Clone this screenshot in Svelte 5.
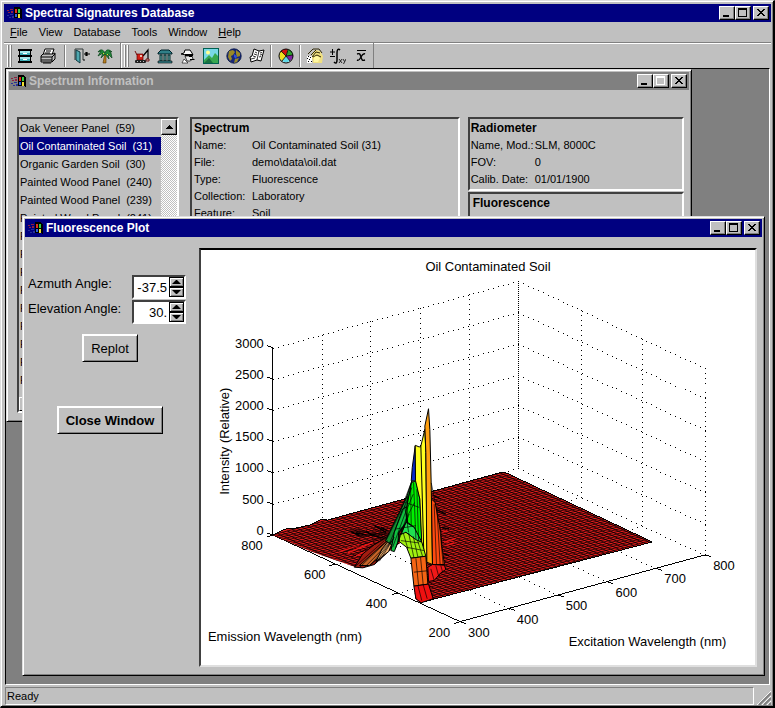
<script lang="ts">
  let azimuth = $state('-37.5');
  let elevation = $state('30.');
  let selected = $state(1);

  const menus = ['File', 'View', 'Database', 'Tools', 'Window', 'Help'];
  const underlined = ['File', 'Help'];
  const toolGroups = [
    [['cabinet', 'printer'], ['exit', 'palm']],
    [['digger', 'museum', 'agent', 'picture', 'globe', 'papers'], ['pie'], ['hand', 'integral', 'mean']],
  ];

  const spectra = [
    'Oak Veneer Panel  (59)',
    'Oil Contaminated Soil  (31)',
    'Organic Garden Soil  (30)',
    'Painted Wood Panel  (240)',
    'Painted Wood Panel  (239)',
    'Painted Wood Panel  (241)',
    ...Array(9).fill('Painted Wood Panel'),
  ];

  const spectrumInfo = [
    ['Name:', 'Oil Contaminated Soil (31)'],
    ['File:', 'demo\\data\\oil.dat'],
    ['Type:', 'Fluorescence'],
    ['Collection:', 'Laboratory'],
    ['Feature:', 'Soil'],
  ];
  const radiometerInfo = [
    ['Name, Mod.:', 'SLM, 8000C'],
    ['FOV:', '0'],
    ['Calib. Date:', '01/01/1900'],
  ];

  // projection of (excitation, emission, intensity) onto the plot
  function project(ex: number, em: number, z = 0) {
    const u = (ex - 300) / 500;
    const v = (800 - em) / 600;
    return [273 + u * 246 + v * 188, 536 - u * 67 + v * 87 - (z / 3000) * 188];
  }

  // a row of single pixels between two points
  function dots(a: number[], b: number[], step = 5) {
    const n = Math.max(1, Math.round(Math.max(Math.abs(b[0] - a[0]), Math.abs(b[1] - a[1])) / step));
    let d = '';
    for (let i = 0; i <= n; i++) {
      const x = Math.round(a[0] + ((b[0] - a[0]) * i) / n);
      const y = Math.round(a[1] + ((b[1] - a[1]) * i) / n);
      d += `M${x} ${y}h1v1h-1z`;
    }
    return d;
  }

  function segment(a: number[], b: number[]) {
    return `M${a[0].toFixed(1)} ${a[1].toFixed(1)}L${b[0].toFixed(1)} ${b[1].toFixed(1)}`;
  }

  let grid = '';
  for (let z = 0; z <= 3000; z += 500) {
    grid += dots(project(300, 800, z), project(800, 800, z));
    grid += dots(project(800, 800, z), project(800, 200, z));
  }
  for (let ex = 400; ex <= 700; ex += 100) {
    grid += dots(project(ex, 800), project(ex, 800, 3000));
    grid += dots(project(ex, 200), project(ex, 800));
  }
  for (let em = 200; em <= 600; em += 200) {
    grid += dots(project(800, em), project(800, em, 3000));
    if (em > 200) grid += dots(project(300, em), project(800, em));
  }
  grid += dots(project(800, 800), project(800, 800, 3000), 2);

  let mesh = '';
  for (let i = 0; i <= 48; i++) {
    const em = 327 + (i * 473) / 48;
    const ex = 300 + (i * 474) / 48;
    mesh += segment(project(300, em), project(774, em));
    mesh += segment(project(ex, 327), project(ex, 800));
  }

  let axes = segment(project(300, 800, 3000), project(300, 800));
  axes += segment(project(300, 800), project(300, 200));
  axes += segment(project(300, 200), project(800, 200));
  const zTicks: { y: number; label: number }[] = [];
  for (let z = 0; z <= 3000; z += 500) {
    const [x, y] = project(300, 800, z);
    axes += segment([x, y], [x - 6, y - 2]);
    zTicks.push({ y: Math.round(y), label: z });
  }
  const emTicks: { x: number; y: number; label: number }[] = [];
  for (let em = 800; em >= 200; em -= 200) {
    const [x, y] = project(300, em);
    axes += segment([x, y], [x - 6, y + 2]);
    emTicks.push({ x: Math.round(x - 10), y: Math.round(y + 15), label: em });
  }
  const exTicks: { x: number; y: number; label: number }[] = [];
  for (let ex = 300; ex <= 800; ex += 100) {
    const [x, y] = project(ex, 200);
    axes += segment([x, y], [x + 6, y + 2]);
    exTicks.push({ x: Math.round(x + 8), y: Math.round(y + 15), label: ex });
  }

  const facets = [
    ['#a01c10', '285,505 310,507 345,497 385,460 405,400 380,415 345,437 310,465'],
    ['#c86428', '300,500 330,500 375,462 395,430 380,428 350,455'],
    ['#f0b070', '350,488 388,458 402,425 388,425 368,450'],
    ['#109030', '378,425 410,360 440,300 458,245 465,300 450,360 420,400 400,440'],
    ['#10c040', '395,455 405,458 416,430 418,400 440,370 448,320 430,330 405,400'],
    ['#00f000', '457,250 470,245 482,300 488,425 478,420 465,385 445,370 440,335'],
    ['#20e050', '440,370 465,385 488,430 470,425 440,400 420,420'],
    ['#0a28c8', '468,140 459,205 456,245 469,245'],
    ['#ffff20', '468,138 480,143 485,140 490,160 494,440 488,440 482,300 469,245'],
    ['#ffff20', '485,140 497,90 500,160 504,480 494,470'],
    ['#ffa010', '508,28 512,90 516,250 520,497 503,490 500,160 497,80'],
    ['#ff4a10', '517,300 528,310 535,350 545,400 548,440 556,497 520,497'],
    ['#a0f010', '420,408 440,400 470,422 488,430 500,472 455,478 442,445 420,428'],
    ['#f46414', '455,478 500,472 506,556 464,562'],
    ['#f01010', '464,562 508,556 522,600 486,612 470,600'],
    ['#f01818', '506,505 520,497 556,499 560,512 545,522 525,545 508,548'],
  ];

  const creases = [
    'M285 505L375 425M300 506L385 425M315 506L392 428M330 502L398 425M345 497L402 420M360 487L405 415M250 460L380 410M275 475L380 418',
    'M270 395L380 408M285 390L360 412M300 415L380 400M340 390L385 412M290 410L350 405M355 385L390 405',
    'M380 425L418 350L458 245M390 435L425 350L458 265M400 445L435 350L462 285M408 450L440 360L466 310M416 430L450 345',
    'M445 290V370M454 260L456 380M463 250L470 420M473 270L478 425M436 320L448 400M410 390L470 380M438 310L480 325',
    'M432 402L446 450M448 402L464 476M462 412L476 474M475 425L490 472M425 425L480 432M442 445L494 455',
    'M470 478L478 560M484 475L492 558M476 560L488 606M492 558L504 600M464 520L503 516',
    'M516 250L528 310M525 315L532 497M534 340L543 497M542 385L552 497M515 510L525 545M530 500L538 530M545 500L550 518',
  ];

  // low bumps around the foot of the ridge
  const ripplesBright = 'M240 458L300 440M265 462L340 430M290 470L350 445M555 430L590 418M560 440L585 432M550 400L565 395';
  const ripplesDark = 'M275 398L300 410M290 402L320 408M320 395L340 412M345 380L380 400M365 385L385 395M340 410L385 420M525 290L545 300M530 330L560 345M548 385L570 390M555 465L570 470M440 295L455 290';
</script>

{#snippet flag()}
  <svg class="flag" viewBox="0 0 16 14" aria-hidden="true">
    <path d="M8 1h5l3 2v10l-3-1H8z" fill="#000" />
    <path d="M9 3h2v4H9z" fill="#e03020" />
    <path d="M12 3h2v4h-2z" fill="#30d040" />
    <path d="M9 8h2v3H9z" fill="#3060e0" />
    <path d="M12 8h2v4h-2z" fill="#f0e030" />
    <path d="M1 4h2v1H1zM4 3h3v1H4zM2 6h2v1H2zM5 5h2v2H5z" fill="#902040" />
    <path d="M1 9h2v1H1zM4 8h3v1H4zM3 11h2v1H3zM6 10h2v2H6z" fill="#283098" />
  </svg>
{/snippet}

{#snippet controls(disabled: boolean)}
  <div class="controls">
    <button aria-label="Minimize"><svg viewBox="0 0 12 10"><path d="M2 7h6v2H2z" /></svg></button>
    <button aria-label="Maximize" {disabled}>
      <svg viewBox="0 0 12 10"><path d="M1 0h9v9H1zM2 2v6h7V2z" fill-rule="evenodd" /></svg>
    </button>
    <button class="close" aria-label="Close">
      <svg viewBox="0 0 12 10"><path d="M2 1h2v1h1v1h2V2h1V1h2v1H9v1H8v1H7v1h1v1h1v1h1v1H8V7H7V6H5v1H4v1H2V7h1V6h1V5h1V4H4V3H3V2H2z" /></svg>
    </button>
  </div>
{/snippet}

{#snippet icon(name: string)}
  <svg class="icon" viewBox="0 0 16 16" aria-hidden="true">
    {#if name === 'cabinet'}
      <path d="M1 1h14v2h-1v4h1v2h-1v4h1v2H1v-2h1V9H1V7h1V3H1z" fill="#000" />
      <path d="M3 3h10v4H3zM3 9h10v4H3z" fill="#40b0b8" />
      <path d="M3 3h10v2H3zM3 9h10v2H3z" fill="#a0e8e8" />
      <path d="M6 5h4v1H6zM6 11h4v1H6z" fill="#fff" />
    {:else if name === 'printer'}
      <path d="M5 1h9l-2 6H3z" fill="#fff" stroke="#000" />
      <path d="M6 3h5M5 5h5" stroke="#000" />
      <path d="M1 8l2-2h10l2-1v6l-3 3H1z" fill="#c0c0c0" stroke="#000" />
      <path d="M1 9h11l3-3M1 12h11M12 9v5M3 15h8" fill="none" stroke="#000" />
    {:else if name === 'exit'}
      <path d="M1 12V1h8v11" fill="none" stroke="#303838" />
      <path d="M2 2l4 2v11l-4-3z" fill="#50a8b0" stroke="#103840" />
      <path d="M10 6h6M12 4v4M13 4v4M9 12h2" stroke="#000" stroke-width="1.2" />
    {:else if name === 'palm'}
      <path d="M8 5l1 3v7H6l1-5z" fill="#b88020" stroke="#503000" stroke-width=".6" />
      <path d="M8 5C6 1 3 1 1 4l3-1-3 5 5-3-2 5 4-4 4 5-1-5 4 4-1-5-2-2 3 1C12 1 9 1 8 5z" fill="#208838" stroke="#084018" stroke-width=".7" />
      <path d="M6 5h1v1H6zM10 6h1v1h-1z" fill="#e0e030" />
    {:else if name === 'digger'}
      <path d="M9 8l5-6v9" fill="none" stroke="#000" stroke-width="1.200" />
      <path d="M3 6h6v6H3z" fill="#d02018" stroke="#600" stroke-width=".7" />
      <path d="M6 7h2v2H6z" fill="#e8c0b0" />
      <path d="M1 3l2 4M12 11h3v2h-3z" fill="none" stroke="#701010" />
      <rect x="1" y="12" width="11" height="3" rx="1" fill="#202020" />
      <path d="M3 13h1v1H3zM6 13h1v1H6zM9 13h1v1H9z" fill="#c0c0c0" />
    {:else if name === 'museum'}
      <path d="M1 5l3-3h8l3 3v1H1z" fill="#308088" stroke="#002028" />
      <path d="M3 7h2v6H3zM7 7h2v6H7zM11 7h2v6h-2z" fill="#70b8b8" stroke="#002828" />
      <path d="M1 13h14v2H1z" fill="#388890" stroke="#000" stroke-width=".6" />
    {:else if name === 'agent'}
      <path d="M1 6l3-1 1-3h5l2 3 1 2H6z" fill="#f8f8f8" stroke="#000" />
      <path d="M5 6h8v2H5z" fill="#000" />
      <path d="M5 8h7l1 3-3 2H7z" fill="#e8e8e8" stroke="#000" stroke-width=".7" />
      <path d="M9 8h3v1H9zM10 11h5l-1 1h-4z" />
      <path d="M4 11l4 4H2z" fill="#fff" stroke="#000" stroke-width=".6" />
    {:else if name === 'picture'}
      <rect x=".5" y=".5" width="15" height="15" fill="#78d8e8" stroke="#006050" />
      <circle cx="5" cy="4.500" r="2" fill="#ffff90" />
      <path d="M1 12l5-5 3 3 3-5 3 3v7H1z" fill="#38a850" />
      <path d="M1 15l5-5 4 5z" fill="#187040" />
    {:else if name === 'globe'}
      <circle cx="8" cy="8" r="7.200" fill="#182878" stroke="#001040" stroke-width=".8" />
      <path d="M3 3l4-1 2 2-2 3-2 1 1 3-2 2-2-4zM10 2l4 3v3l-3 1-1-3zM9 11l4-1-2 4-3 1z" fill="#988828" />
      <path d="M8 6l3 2-1 3-2-2z" fill="#3050d8" />
    {:else if name === 'papers'}
      <path d="M5 1l5 2 5-1-3 11-4-1-6 2-1-5 2-1z" fill="#fff" stroke="#000" />
      <path d="M10 3L8 12M6 4l2 1M5 6l3 1M4 8l3 1M11 5l2-.5M11 7l2-.5M10 9l2-.5M2 11l4-1" stroke="#000" stroke-width=".8" />
    {:else if name === 'pie'}
      <circle cx="8" cy="8" r="7" fill="#fff" />
      <path d="M8 8L3 3a7 7 0 0 1 7-1.700z" fill="#d01010" />
      <path d="M8 8l2-6.700A7 7 0 0 1 15 7z" fill="#30a030" />
      <path d="M8 8l7-1a7 7 0 0 1-3 6z" fill="#8020a0" />
      <path d="M8 8l4 5a7 7 0 0 1-8 0z" fill="#60d8e8" />
      <path d="M8 8l-4 5A7 7 0 0 1 3 3z" fill="#f0e020" />
      <circle cx="8" cy="8" r="7" fill="none" stroke="#000" />
      <path d="M8 8L3 3M8 8l2-6M8 8l7-1M8 8l4 5M8 8l-4 5" stroke="#000" stroke-width=".8" />
    {:else if name === 'hand'}
      <path d="M0 8h5v7H0z" fill="#fff" />
      <path d="M1 8h1v1H1zM3 9h1v1H3zM0 10h1v1H0zM2 11h1v1H2zM1 13h1v1H1zM4 13h1v1H4z" />
      <path d="M5 9l1-5 3-2 4 1 3 5-1 7H6z" fill="#f0e080" />
      <path d="M1 6l5-5h6l3 4M4 7l5-5M5 9l4-5 4 1M6 9l4-2 4 2" fill="none" stroke="#302808" />
      <path d="M7 9l3-1 3 2-2 4H7z" fill="#fff8a0" />
    {:else if name === 'integral'}
      <path d="M0 4h5M2.500 1v6M0 8.500h5" stroke="#000" fill="none" />
      <path d="M10 2C8 0 7 2 7 5v7c0 3-1 4-3 2" stroke="#000" stroke-width="1.500" fill="none" />
      <path d="M9 11l3 4M12 11l-3 4M13 11l1.500 2.500M16 11l-2.500 5" stroke="#000" stroke-width=".8" />
    {:else}
      <path d="M4 2.500h9" stroke="#000" />
      <path d="M4 6c3-1 3 0 4 3s1 4 4 3M12 6c-2-1-3 1-4 3s-2 4-4 3" stroke="#000" stroke-width="1.400" fill="none" />
    {/if}
  </svg>
{/snippet}

{#snippet info(rows: string[][])}
  <dl>
    {#each rows as [term, value]}
      <dt>{term}</dt>
      <dd>{value}</dd>
    {/each}
  </dl>
{/snippet}

<div class="app">
  <header class="titlebar">
    {@render flag()}
    <h1>Spectral Signatures Database</h1>
    {@render controls(false)}
  </header>

  <nav class="menubar">
    {#each menus as menu}
      <button>
        {#if underlined.includes(menu)}<u>{menu[0]}</u>{menu.slice(1)}{:else}{menu}{/if}
      </button>
    {/each}
  </nav>

  <div class="toolbar">
    {#each toolGroups as group}
      <div class="band">
        <span class="grip"></span><span class="grip"></span>
        {#each group as part}
          <div class="part">
            {#each part as tool}
              <button aria-label={tool}>{@render icon(tool)}</button>
            {/each}
          </div>
        {/each}
      </div>
    {/each}
  </div>

  <main class="desktop">
    <section class="window info-window">
      <header class="titlebar inactive">
        {@render flag()}
        <h2>Spectrum Information</h2>
        {@render controls(true)}
      </header>
      <div class="info-body">
        <div class="listbox">
          <ul>
            {#each spectra as name, i}
              <li><button class:selected={i === selected} onclick={() => (selected = i)}>{name}</button></li>
            {/each}
          </ul>
          <div class="scrollbar">
            <button aria-label="Scroll up"><svg viewBox="0 0 7 4"><path d="M3 0h1v1h1v1h1v1h1v1H0V3h1V2h1V1h1z" /></svg></button>
          </div>
          <div class="hscroll"><button aria-label="Scroll left"></button></div>
        </div>
        <div class="panel spectrum">
          <h3>Spectrum</h3>
          {@render info(spectrumInfo)}
        </div>
        <div class="side">
          <div class="panel radiometer">
            <h3>Radiometer</h3>
            {@render info(radiometerInfo)}
          </div>
          <div class="panel fluorescence">
            <h3>Fluorescence</h3>
          </div>
        </div>
      </div>
    </section>

    <section class="window plot-window">
      <header class="titlebar">
        {@render flag()}
        <h2>Fluorescence Plot</h2>
        {@render controls(false)}
      </header>
      <div class="plot-body">
        <form class="settings" onsubmit={(e) => e.preventDefault()}>
          <div class="fields">
            <label for="azimuth">Azmuth Angle:</label>
            <div class="spin">
              <input id="azimuth" bind:value={azimuth} />
              <div class="arrows">
                <button type="button" aria-label="Increase azimuth"><svg viewBox="0 0 9 4"><path d="M4 0h1l4 4H0z" /></svg></button>
                <button type="button" aria-label="Decrease azimuth"><svg viewBox="0 0 9 4"><path d="M0 0h9L5 4H4z" /></svg></button>
              </div>
            </div>
            <label for="elevation">Elevation Angle:</label>
            <div class="spin">
              <input id="elevation" bind:value={elevation} />
              <div class="arrows">
                <button type="button" aria-label="Increase elevation"><svg viewBox="0 0 9 4"><path d="M4 0h1l4 4H0z" /></svg></button>
                <button type="button" aria-label="Decrease elevation"><svg viewBox="0 0 9 4"><path d="M0 0h9L5 4H4z" /></svg></button>
              </div>
            </div>
          </div>
          <button class="push">Replot</button>
          <button type="button" class="push strong">Close Window</button>
        </form>

        <div class="plot">
          <svg viewBox="201 250 556 416" role="img" aria-label="Oil Contaminated Soil">
            <defs>
              <clipPath id="surface">
                <path d="M273 536L288 529L292 530L310 526L323 520L328 521L503 473L508 474L654 543L421 604L416 600L413 560L406 540L390 552L375 565L363 569L355 568L310 552Z" />
              </clipPath>
            </defs>
            <path class="dots" d={grid} />
            <path class="axes" d={axes} />
            <g clip-path="url(#surface)">
              <rect x="260" y="460" width="400" height="150" fill="#e01c1c" />
              <path class="mesh" d={mesh} />
            </g>
            <path class="rim" d="M273 536L288 529L292 530L310 526L323 520L328 521L503 473L508 474L654 543L421 604" />
            <g transform="translate(260 400) scale(.33333)">
              <path class="ripple bright" d={ripplesBright} />
              <path class="ripple" d={ripplesDark} />
              {#each facets as [fill, points]}
                <polygon class="facet" {fill} {points} />
              {/each}
              {#each creases as d}
                <path class="crease" {d} />
              {/each}
            </g>
            <text x="489" y="271" text-anchor="middle">Oil Contaminated Soil</text>
            {#each zTicks as t}
              <text x="264" y={t.y} text-anchor="end">{t.label}</text>
            {/each}
            {#each emTicks as t}
              <text x={t.x} y={t.y} text-anchor="end">{t.label}</text>
            {/each}
            {#each exTicks as t}
              <text x={t.x} y={t.y}>{t.label}</text>
            {/each}
            <text transform="translate(229 442) rotate(-90)" text-anchor="middle">Intensity (Relative)</text>
            <text x="208" y="642">Emission Wavelength (nm)</text>
            <text x="570" y="647">Excitation Wavelength (nm)</text>
          </svg>
        </div>
      </div>
    </section>
  </main>

  <footer class="statusbar">
    <span>Ready</span>
    <svg viewBox="0 0 14 14" aria-hidden="true">
      <path d="M0 14L14 0M5 14l9-9M10 14l4-4" stroke="#fff" />
      <path d="M2 14L14 2M7 14l7-7M12 14l2-2" stroke="#808080" stroke-width="2" />
    </svg>
  </footer>
</div>

<style>
  :global(body) {
    margin: 0;
    background: #c0c0c0;
  }

  .app {
    box-sizing: border-box;
    min-height: 100vh;
    display: flex;
    flex-direction: column;
    padding: 3px 2px 1px 3px;
    border: 1px solid #dfdfdf;
    border-right: 2px solid #000;
    border-bottom: 2px solid #000;
    box-shadow: inset 1px 1px #fff, inset -1px -1px #808080;
    background: #c0c0c0;
    color: #000;
    font: 11px/17px "Liberation Sans", Arial, sans-serif;
  }

  button,
  input {
    box-sizing: border-box;
    margin: 0;
    padding: 0;
    border: 0;
    border-radius: 0;
    background: none;
    color: inherit;
    font: inherit;
  }

  h1,
  h2,
  h3,
  dl,
  dd,
  ul {
    margin: 0;
    padding: 0;
  }

  h1,
  h2,
  h3 {
    font-size: 12px;
    font-weight: bold;
    line-height: 18px;
  }

  svg {
    display: block;
    flex: none;
  }

  .titlebar {
    display: flex;
    align-items: center;
    height: 18px;
    padding: 0 2px;
    background: #000080;
    color: #fff;
  }

  .titlebar.inactive {
    padding-left: 1px;
    background: #808080;
    color: #c0c0c0;
  }

  .flag {
    width: 16px;
    height: 14px;
    margin-right: 3px;
    shape-rendering: crispEdges;
  }

  .controls {
    display: flex;
    margin-left: auto;
  }

  .controls button {
    width: 16px;
    height: 14px;
    padding: 1px;
    border: 1px solid;
    border-color: #fff #000 #000 #fff;
    box-shadow: inset -1px -1px #808080;
    background: #c0c0c0;
  }

  .controls .close {
    margin-left: 2px;
  }

  .controls svg {
    width: 12px;
    height: 10px;
    fill: #000;
    shape-rendering: crispEdges;
  }

  .controls button:disabled svg {
    fill: #fff;
  }

  .menubar {
    display: flex;
    gap: 11px;
    height: 20px;
    padding-left: 6px;
  }

  .menubar button {
    line-height: 19px;
  }

  .toolbar {
    display: flex;
    height: 25px;
    border-top: 1px solid #808080;
    box-shadow: inset 0 1px #fff;
  }

  .band {
    display: flex;
    align-items: center;
    padding: 0 4px 0 3px;
    border-right: 1px solid #808080;
  }

  .band + .band {
    padding: 0 1px 0 2px;
    border-left: 1px solid #fff;
  }

  .grip {
    height: 22px;
    margin-right: 1px;
    border-left: 1px solid #fff;
    border-right: 1px solid #808080;
  }

  .part {
    display: flex;
  }

  .part + .part {
    margin-left: 3px;
    padding-left: 2px;
    border-left: 1px solid #fff;
    box-shadow: -1px 0 #808080;
  }

  .band:first-child .part + .part {
    margin-left: 6px;
    padding-left: 4px;
  }

  .part button {
    display: flex;
    align-items: center;
    justify-content: center;
    width: 23px;
    height: 22px;
  }

  .icon {
    width: 16px;
    height: 16px;
  }

  .desktop {
    position: relative;
    flex: 1;
    min-height: 612px;
    margin: 0 1px;
    border: 1px solid;
    border-color: #000 #fff #fff #000;
    background: #808080;
  }

  .window {
    position: absolute;
    border: 1px solid;
    border-color: #dfdfdf #000 #000 #dfdfdf;
    box-shadow: inset 1px 1px #fff, inset -1px -1px #808080;
    background: #c0c0c0;
  }

  .info-window {
    top: 0;
    right: 77px;
    left: 0;
    padding: 2px;
  }

  .plot-window {
    top: 147px;
    right: 4px;
    left: 16px;
    padding: 2px;
  }

  .info-body {
    display: grid;
    grid-template-columns: 162px 271fr 215fr;
    column-gap: 8px;
    padding: 27px 5px 6px 8px;
  }

  .listbox {
    display: grid;
    grid-template-columns: 1fr 16px;
    border: 2px solid;
    border-color: #404040 #fff #fff #404040;
  }

  .spectrum {
    margin-left: 3px;
  }

  ul {
    height: 278px;
    overflow: hidden;
    list-style: none;
  }

  li button {
    display: block;
    width: 100%;
    height: 18px;
    padding-left: 1px;
    text-align: left;
    line-height: 18px;
    white-space: pre;
  }

  li .selected {
    background: #000080;
    color: #fff;
  }

  .scrollbar {
    background: repeating-conic-gradient(#fff 0 25%, #c0c0c0 0 50%) 0 0 / 2px 2px;
  }

  .scrollbar button {
    display: flex;
    align-items: center;
    justify-content: center;
    width: 16px;
    height: 16px;
    border: 1px solid;
    border-color: #fff #000 #000 #fff;
    box-shadow: inset -1px -1px #808080;
    background: #c0c0c0;
  }

  .scrollbar svg {
    width: 7px;
    height: 4px;
  }

  .hscroll {
    grid-column: 1 / -1;
    height: 14px;
  }

  .hscroll button {
    width: 16px;
    height: 14px;
    border: 1px solid;
    border-color: #fff #000 #000 #fff;
  }

  .side {
    display: flex;
    flex-direction: column;
    gap: 1px;
  }

  .panel {
    padding: 0 2px;
    border: 2px solid;
    border-color: #404040 #fff #fff #404040;
  }

  .radiometer {
    padding: 0 0 1px 1px;
  }

  .fluorescence {
    flex: 1;
    padding: 0 3px;
  }

  dl {
    display: grid;
    grid-template-columns: 58px 1fr;
  }

  dt {
    white-space: nowrap;
  }

  .radiometer dl {
    grid-template-columns: 64px 1fr;
  }

  .plot-body {
    display: flex;
    padding: 11px 5px 6px 0;
    font-size: 13px;
  }

  .settings {
    display: flex;
    flex-direction: column;
    align-items: center;
    box-sizing: border-box;
    width: 174px;
    flex: none;
    padding: 27px 7px 0 3px;
  }

  .fields {
    display: grid;
    grid-template-columns: 104px 54px;
    row-gap: 1px;
    align-self: flex-start;
  }

  .spin {
    display: flex;
    box-sizing: border-box;
    height: 24px;
    border: 2px solid;
    border-color: #404040 #fff #fff #404040;
    background: #fff;
  }

  .spin input {
    width: 35px;
    padding-right: 2px;
    text-align: right;
  }

  .arrows {
    display: grid;
    grid-template-rows: 1fr 1fr;
    width: 15px;
  }

  .arrows button {
    display: flex;
    align-items: center;
    justify-content: center;
    border: 1px solid #000;
    box-shadow: inset 1px 1px #fff, inset -1px -1px #808080;
    background: #c0c0c0;
  }

  .arrows svg {
    width: 9px;
    height: 4px;
  }

  .push {
    height: 28px;
    margin-top: 10px;
    padding: 0 8px;
    border: 1px solid;
    border-color: #fff #000 #000 #fff;
    box-shadow: inset 1px 1px #fff, inset -1px -1px #808080;
    background: #c0c0c0;
  }

  .push.strong {
    margin-top: 44px;
    font-weight: bold;
  }

  .plot {
    flex: 1;
    min-width: 0;
    border: 2px solid;
    border-color: #404040 #dfdfdf #dfdfdf #404040;
    border-top-color: #000;
    background: #fff;
  }

  .plot svg {
    width: 100%;
    height: auto;
  }

  .dots {
    fill: #000;
    shape-rendering: crispEdges;
  }

  .axes,
  .rim {
    fill: none;
    stroke: #000;
    stroke-width: 1;
    shape-rendering: crispEdges;
  }

  .mesh {
    fill: none;
    stroke: #000;
    stroke-width: .8;
  }

  .facet {
    stroke: #000;
    stroke-width: 3;
    stroke-linejoin: round;
  }

  .crease {
    fill: none;
    stroke: #000;
    stroke-width: 2;
  }

  .ripple {
    fill: none;
    stroke: #000;
    stroke-width: 4;
  }

  .ripple.bright {
    stroke: #f01818;
  }

  .statusbar {
    display: flex;
    align-items: flex-end;
    justify-content: space-between;
    gap: 3px;
    padding: 2px 0 0 1px;
  }

  .statusbar span {
    flex: 1;
    padding-left: 1px;
    border: 1px solid;
    border-color: #808080 #fff #fff #808080;
    line-height: 16px;
  }

  .statusbar svg {
    width: 14px;
    height: 14px;
  }
</style>
